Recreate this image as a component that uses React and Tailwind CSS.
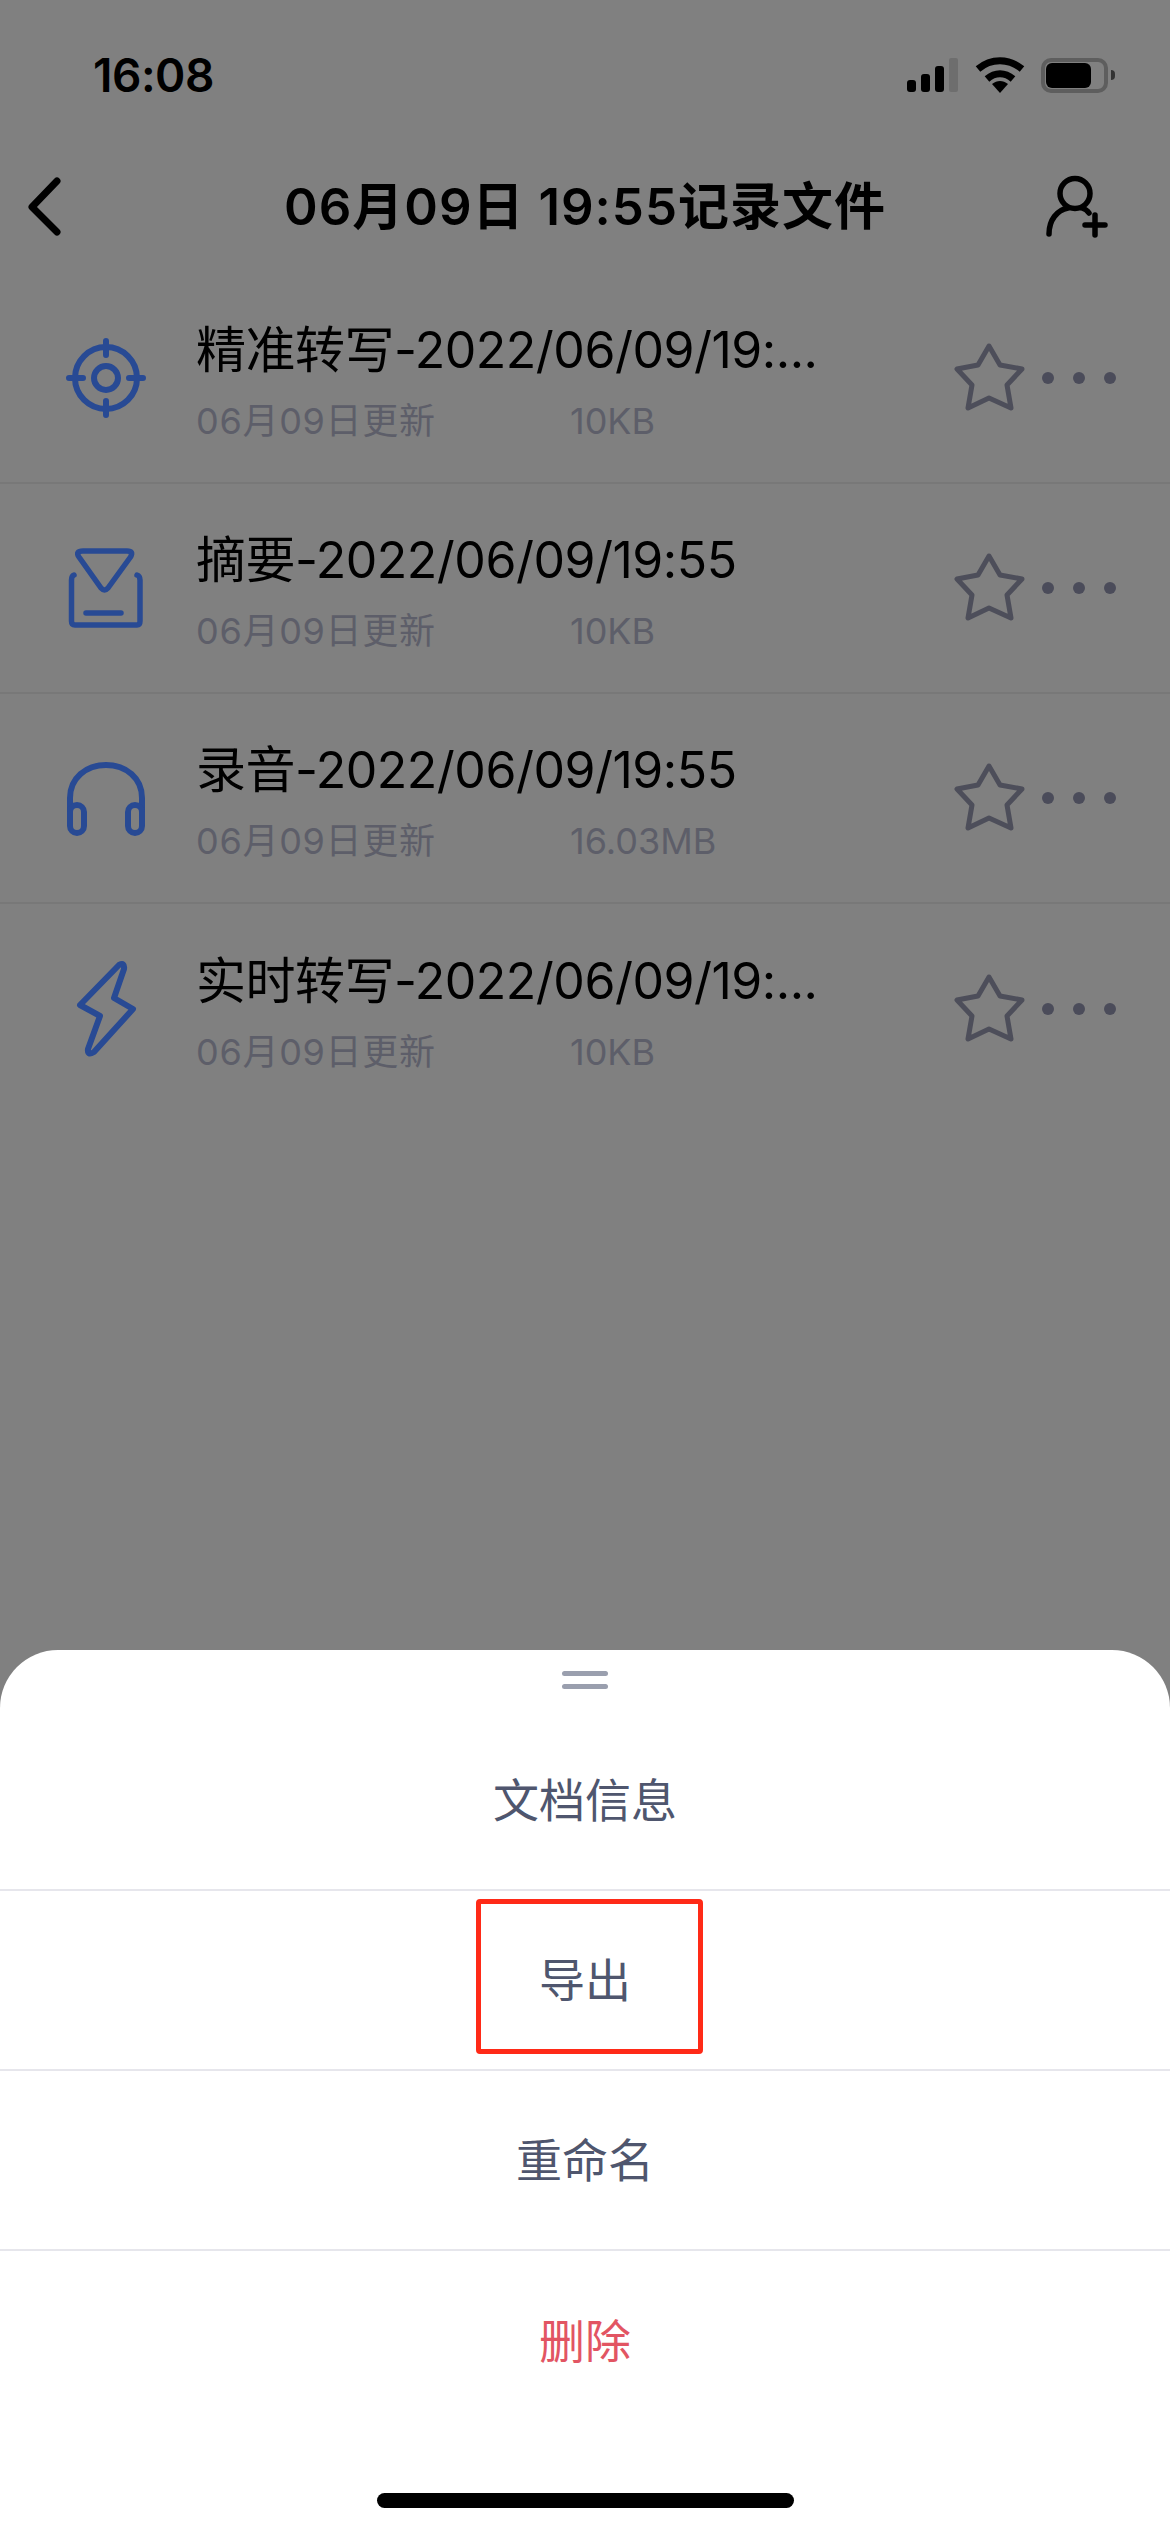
import React from "react";

const files = [
  { name: "精准转写-2022/06/09/19:...", size: "10KB", icon: "target" },
  { name: "摘要-2022/06/09/19:55", size: "10KB", icon: "inbox" },
  { name: "录音-2022/06/09/19:55", size: "16.03MB", icon: "headphones" },
  { name: "实时转写-2022/06/09/19:...", size: "10KB", icon: "bolt" },
];

const FileIcon = ({ type }) => {
  const common = {
    width: 90,
    height: 100,
    viewBox: "0 0 90 100",
    fill: "none",
    stroke: "#284a94",
    strokeLinecap: "round",
    strokeLinejoin: "round",
  };
  if (type === "target") {
    return (
      <svg {...common} strokeWidth="6">
        <circle cx="45" cy="50" r="31" />
        <circle cx="45" cy="50" r="12" />
        <path d="M45 13V27M45 73V87M8 50H22M68 50H82" />
      </svg>
    );
  }
  if (type === "inbox") {
    return (
      <svg {...common} strokeWidth="5.5">
        <path d="M22 13H66Q73 13 69.5 19L47 50Q43.5 54 40 50L18 19Q14 13 22 13Z" />
        <path d="M13 37Q10.5 38 10.5 42V83Q10.5 87 14 87H76Q79 87 79 83V42Q79 38 76 37" />
        <path d="M25 75H60" />
      </svg>
    );
  }
  if (type === "headphones") {
    return (
      <svg {...common} strokeWidth="6">
        <path d="M9 72V50C9 30 25 17 45 17C65 17 81 30 81 50V72" />
        <rect x="9" y="57" width="14" height="28" rx="7" />
        <rect x="67" y="57" width="14" height="28" rx="7" />
      </svg>
    );
  }
  return (
    <svg {...common} strokeWidth="6">
      <path d="M58 6Q64 3 63 10L53 39L72 50L33 93Q26 97 27 90L39 57L19 46Z" />
    </svg>
  );
};

const Star = () => (
  <svg width="76" height="76" viewBox="0 0 76 76" fill="none" stroke="#4d4e5a" strokeWidth="5" strokeLinejoin="round">
    <path d="M36 6L47 25L69 29L54 45L58 68L36 58L15 68L19 45L4 29L25 25Z" />
  </svg>
);

const StatusIcons = () => (
  <div className="flex items-center">
    <div className="flex items-end gap-[5px] h-[34px]">
      <div className="w-[9px] h-[12px] rounded-[3px] bg-black" />
      <div className="w-[9px] h-[18px] rounded-[3px] bg-black" />
      <div className="w-[9px] h-[26px] rounded-[3px] bg-black" />
      <div className="w-[9px] h-[34px] rounded-[2px] bg-[#6e6e6e]" />
    </div>
    <svg className="ml-[17px]" width="50" height="36" viewBox="0 0 50 36" fill="none" stroke="#000" strokeWidth="7">
      <path d="M3 12C16 1 34 1 47 12" />
      <path d="M12 22C20 15 30 15 38 22" />
      <path d="M17 27L25 36L33 27C28 23 22 23 17 27Z" fill="#000" stroke="none" />
    </svg>
    <div className="ml-[16px] w-[67px] h-[35px] border-4 border-[#5e5e5e] rounded-[10px] p-px">
      <div className="w-[45px] h-[25px] bg-black rounded-[6px]" />
    </div>
    <div className="ml-[3px] w-[4px] h-[10px] rounded-r-full bg-[#333]" />
  </div>
);

const SheetRow = ({ label, danger, boxed }) => (
  <div
    className={`relative h-[180px] flex items-center justify-center text-[46px] ${
      danger ? "text-[#e25563]" : "text-[#4f566e] border-b-2 border-[#e6e6ec]"
    }`}
  >
    {label}
    {boxed && (
      <div className="absolute left-[476px] top-[8px] w-[227px] h-[155px] border-[5px] border-[#ff2a17] rounded-[4px]" />
    )}
  </div>
);

export default function App() {
  return (
    <div className="w-[1170px] h-[2532px] flex flex-col bg-[#808080] overflow-hidden font-[Inter,'Noto_Sans_CJK_SC',sans-serif]">
      {/* status bar */}
      <div className="h-[150px] shrink-0 flex items-center justify-between pl-[93px] pr-[55px]">
        <span className="text-[46px] font-semibold text-black tracking-[-0.5px]">16:08</span>
        <StatusIcons />
      </div>

      {/* nav */}
      <div className="relative h-[114px] mb-[10px] shrink-0 flex items-center justify-center">
        <svg className="absolute left-[24px] top-[22px]" width="40" height="66" viewBox="0 0 40 66" fill="none" stroke="#000" strokeWidth="7" strokeLinecap="round" strokeLinejoin="round">
          <path d="M33 9L8 35L33 60" />
        </svg>
        <h1 className="text-[51px] font-semibold text-black tracking-[1px]">06月09日 19:55记录文件</h1>
        <svg className="absolute left-[1040px] top-[22px]" width="72" height="70" viewBox="0 0 72 70" fill="none" stroke="#000" strokeWidth="5.5" strokeLinecap="round">
          <circle cx="35" cy="21.5" r="15" />
          <path d="M9 62C9 48 17 38 28 36M42 36C45 37 47 38 49 41" />
          <path d="M55 43V63M45 53H65" />
        </svg>
      </div>

      {/* file list */}
      <div className="shrink-0">
        {files.map((f, i) => (
          <div
            key={f.name}
            className={`h-[210px] flex items-center pl-[61px] pr-[54px] ${
              i < files.length - 1 ? "border-b-2 border-[#787878]" : ""
            }`}
          >
            <FileIcon type={f.icon} />
            <div className="ml-[45px] pt-[5px] flex-1 min-w-0">
              <div className="text-[50px] leading-[64px] text-black whitespace-nowrap tracking-[-0.5px]">{f.name}</div>
              <div className="flex text-[36px] leading-[44px] text-[#5d5e69] mt-[17px]">
                <span className="w-[374px] tracking-[0.7px]">06月09日更新</span>
                <span>{f.size}</span>
              </div>
            </div>
            <Star />
            <div className="ml-[13px] flex gap-[19px]">
              <div className="w-[12px] h-[12px] rounded-full bg-[#4b4c5a]" />
              <div className="w-[12px] h-[12px] rounded-full bg-[#4b4c5a]" />
              <div className="w-[12px] h-[12px] rounded-full bg-[#4b4c5a]" />
            </div>
          </div>
        ))}
      </div>

      {/* bottom sheet */}
      <div className="mt-auto h-[882px] shrink-0 bg-white rounded-t-[58px] flex flex-col">
        <div className="h-[61px] shrink-0 pt-[21px] flex flex-col items-center gap-[8px]">
          <div className="w-[46px] h-[5px] rounded-full bg-[#9a9fae]" />
          <div className="w-[46px] h-[5px] rounded-full bg-[#9a9fae]" />
        </div>
        <SheetRow label="文档信息" />
        <SheetRow label="导出" boxed />
        <SheetRow label="重命名" />
        <SheetRow label="删除" danger />
        <div className="mt-[62px] mx-auto w-[417px] h-[15px] rounded-full bg-black" />
      </div>
    </div>
  );
}
